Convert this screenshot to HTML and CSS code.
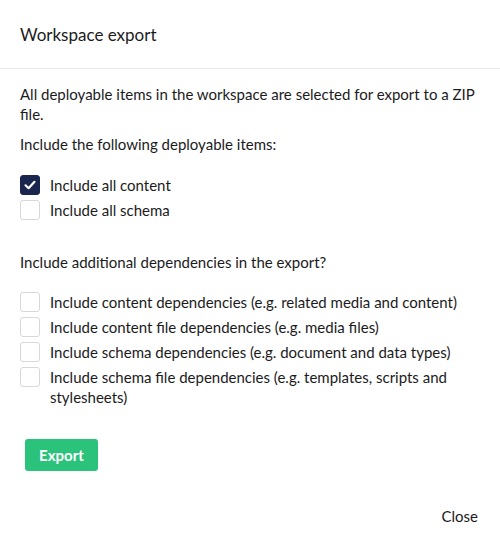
FILE: index.html
```html
<!DOCTYPE html>
<html>
<head>
<meta charset="utf-8">
<link rel="stylesheet" href="styles.css">
</head>
<body>
<div class="dialog">
  <div class="header"><h1 class="title">Workspace export</h1></div>
  <div class="content">
    <p class="para">All deployable items in the workspace are selected for export to a ZIP file.</p>
    <p class="para">Include the following deployable items:</p>
    <div class="group first">
      <label class="row"><span class="box checked"><svg width="14" height="14" viewBox="0 0 14 14"><path d="M2.5 7.3 L5.6 10.2 L11.5 3.8" fill="none" stroke="#fff" stroke-width="2.2" stroke-linecap="round" stroke-linejoin="round"/></svg></span><span class="lbl">Include all content</span></label>
      <label class="row"><span class="box"></span><span class="lbl">Include all schema</span></label>
    </div>
    <p class="para question">Include additional dependencies in the export?</p>
    <div class="group deps">
      <label class="row"><span class="box"></span><span class="lbl">Include content dependencies (e.g. related media and content)</span></label>
      <label class="row"><span class="box"></span><span class="lbl">Include content file dependencies (e.g. media files)</span></label>
      <label class="row"><span class="box"></span><span class="lbl">Include schema dependencies (e.g. document and data types)</span></label>
      <label class="row"><span class="box"></span><span class="lbl">Include schema file dependencies (e.g. templates, scripts and stylesheets)</span></label>
    </div>
    <button class="export">Export</button>
  </div>
  <div class="footer"><button class="close">Close</button></div>
</div>
</body>
</html>
```
FILE: styles.css
```css
html, body {
  margin: 0;
  padding: 0;
  background: #fff;
}
body {
  font-family: Lato, "Open Sans", sans-serif;
  color: #1b1b1d;
  font-size: 15px;
  line-height: 20px;
}
.dialog {
  width: 500px;
  height: 541px;
  display: flex;
  flex-direction: column;
}
.header {
  height: 68px;
  border-bottom: 1px solid #e9e9eb;
  display: flex;
  align-items: center;
  padding: 0 20px;
}
.title {
  margin: 0;
  font-size: 17px;
  font-weight: 400;
  line-height: 20px;
  margin-top: 2px;
}
.content {
  padding: 15px 20px 0 20px;
  flex: 1;
  display: flex;
  flex-direction: column;
  align-items: flex-start;
}
.para {
  margin: 0 0 10px 0;
}
.group {
  display: flex;
  flex-direction: column;
  gap: 5px;
  width: 100%;
}
.group.first {
  margin-top: 11px;
}
.question {
  margin-top: 32px;
  margin-bottom: 0;
}
.deps {
  margin-top: 20px;
}
.row {
  display: flex;
  align-items: flex-start;
  gap: 10px;
}
.box {
  flex: none;
  width: 18px;
  height: 18px;
  border: 1px solid #d8d7d9;
  border-radius: 3px;
  display: flex;
  align-items: center;
  justify-content: center;
  background: #fff;
}
.box.checked {
  background: #1b264f;
  border-color: #1b264f;
}
.lbl {
  line-height: 20px;
}
.export {
  margin-top: 32px;
  margin-left: 5px;
  width: 73px;
  height: 32px;
  border: none;
  border-radius: 3px;
  background: #2bc37c;
  color: #fff;
  font-family: Lato, sans-serif;
  font-weight: 700;
  font-size: 15px;
  padding: 0;
}
.footer {
  height: 35px;
  display: flex;
  justify-content: flex-end;
  align-items: flex-start;
  padding: 0 20px;
}
.close {
  background: none;
  border: none;
  font-family: Lato, sans-serif;
  font-size: 15px;
  color: #1b1b1d;
  padding: 0;
  line-height: 20px;
  margin-right: 2px;
}
```
